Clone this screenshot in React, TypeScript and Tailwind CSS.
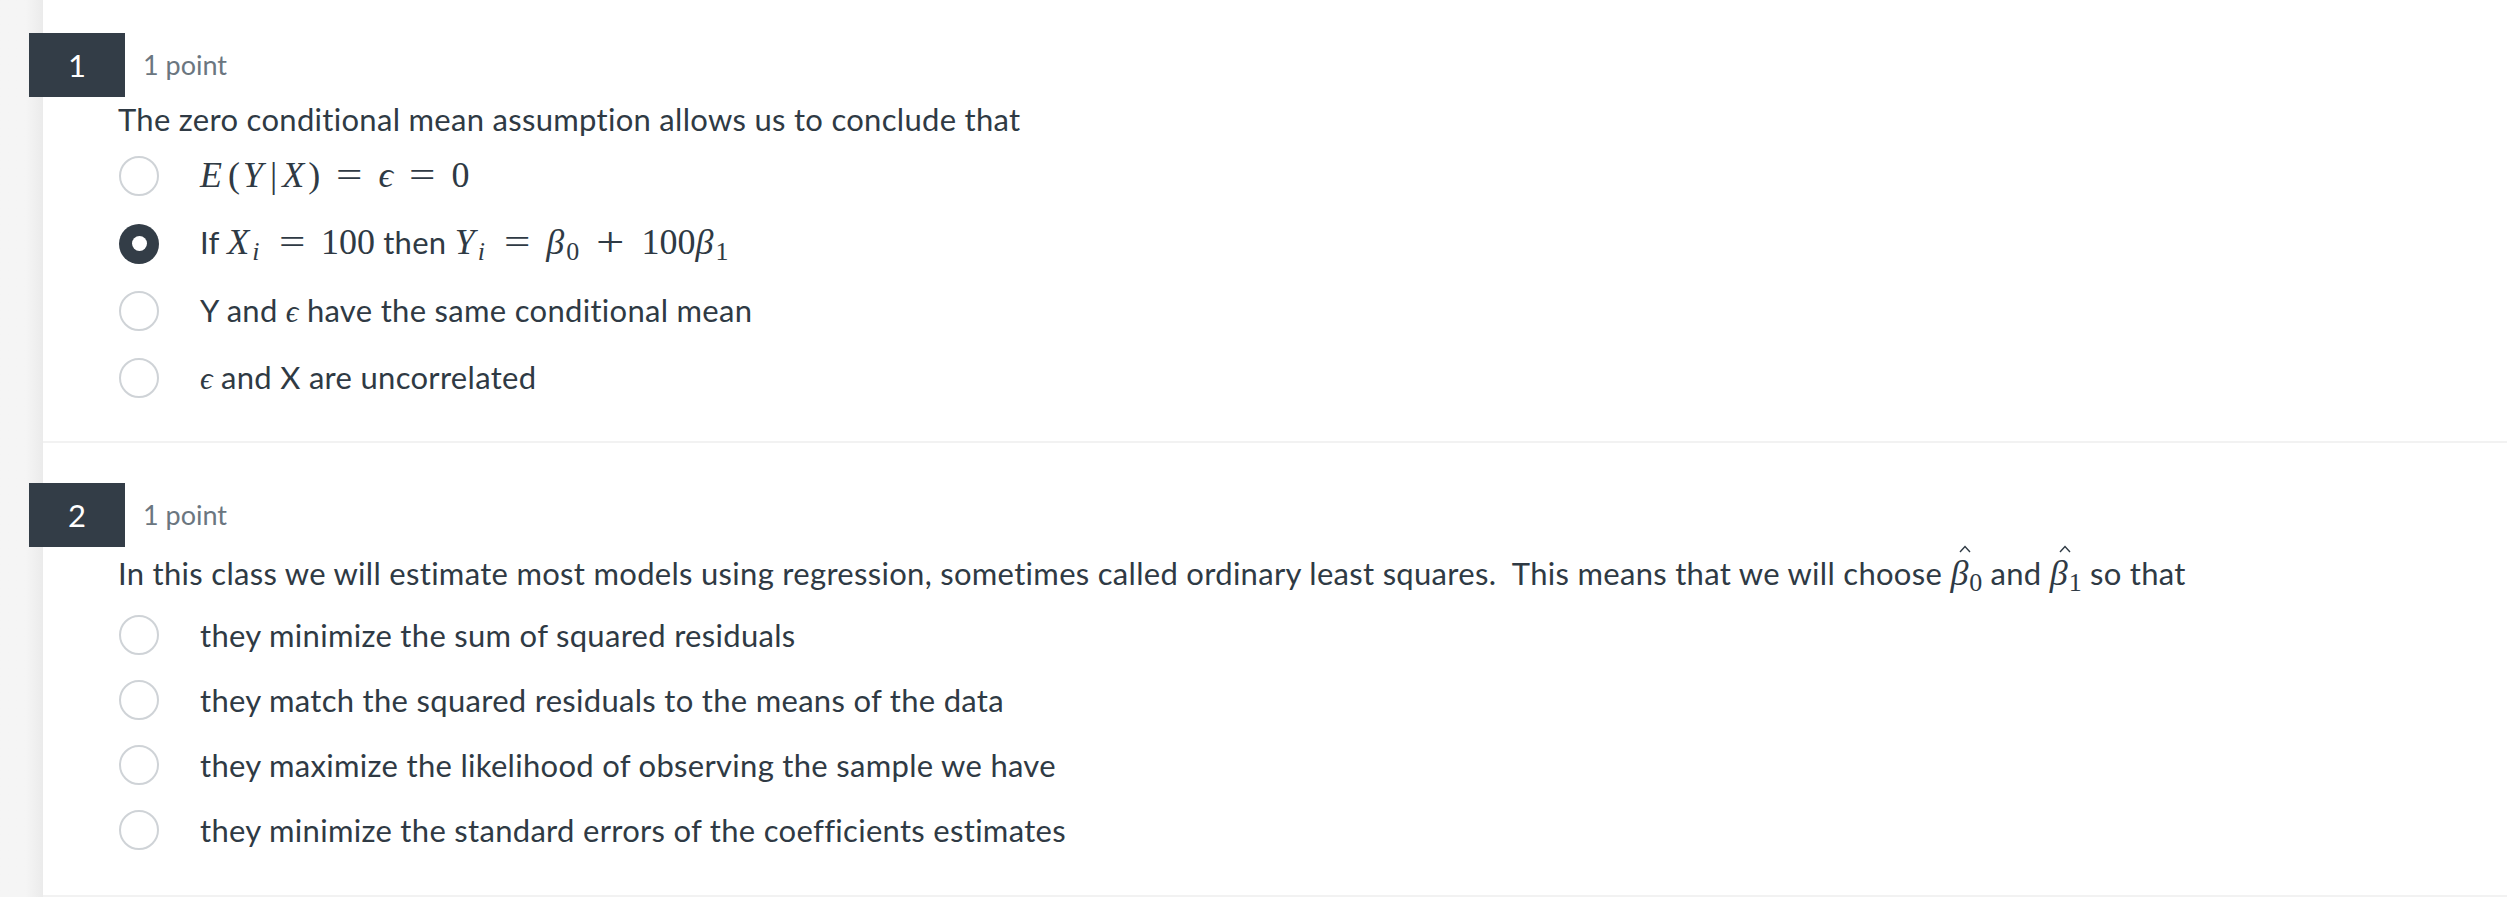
import React from "react";

const serif = "font-['Liberation_Serif',serif]";

type Kids = { children: React.ReactNode };

function Radio({ checked = false }: { checked?: boolean }) {
  if (checked) {
    return (
      <span className="flex h-10 w-10 shrink-0 items-center justify-center rounded-full bg-[#333d47]">
        <span className="h-[15px] w-[15px] rounded-full bg-white" />
      </span>
    );
  }
  return <span className="h-10 w-10 shrink-0 rounded-full border-2 border-[#cfd3d7] bg-white" />;
}

// math helpers (katex-ish)
function M({ children }: Kids) {
  return <span className={`${serif} text-[36px] tracking-normal`}>{children}</span>;
}
function V({ children, r = 0 }: Kids & { r?: number }) {
  return (
    <span className="italic" style={r ? { marginRight: r } : undefined}>
      {children}
    </span>
  );
}
function Eq() {
  return <span className="mx-[19px] inline-block scale-x-[1.3]">=</span>;
}
function Plus() {
  return <span className="mx-[21px] inline-block scale-x-[1.4] scale-y-[1.15]">+</span>;
}
function Sub({ children, italic = false }: Kids & { italic?: boolean }) {
  return (
    <span className={`relative top-[6px] text-[26px] ${italic ? "mx-[3px] italic" : "ml-px"}`}>
      {children}
    </span>
  );
}
function Hat() {
  return (
    <svg
      className="absolute left-[9px] top-[-8px]"
      width="12"
      height="8"
      viewBox="0 0 12 8"
      fill="none"
      stroke="#2f3a44"
      strokeWidth="1.4"
    >
      <path d="M1 7 L6 1.5 L11 7" />
    </svg>
  );
}
function HatBeta({ sub }: { sub: string }) {
  return (
    <M>
      <span className="relative italic">
        β
        <Hat />
      </span>
      <Sub>{sub}</Sub>
    </M>
  );
}

function Option({ checked, math, children }: Kids & { checked?: boolean; math?: boolean }) {
  return (
    <div className={`flex items-center gap-[41px] pl-px ${math ? "h-[43px]" : "min-h-10"}`}>
      <Radio checked={checked} />
      <div className={math ? "leading-[43px]" : "leading-[40px]"}>{children}</div>
    </div>
  );
}

function Question({
  num,
  pad,
  qClass,
  prompt,
  children,
}: Kids & { num: number; pad: string; qClass: string; prompt: React.ReactNode }) {
  return (
    <section className={`border-b-2 border-[#f2f2f2] ${pad}`}>
      {/* header */}
      <div className="-ml-[14px] flex items-center gap-[18px]">
        <div className="flex h-16 w-24 items-center justify-center bg-[#333d47] text-[31px] tracking-normal text-white">
          {num}
        </div>
        <span className="text-[27px] tracking-normal text-[#6b7680]">1 point</span>
      </div>

      <p className={`pl-[75px] leading-[36px] ${qClass}`}>{prompt}</p>

      <div className="flex flex-col gap-[25px] pl-[75px]">{children}</div>
    </section>
  );
}

export default function App() {
  return (
    <div className="flex min-h-screen w-full bg-white font-['Lato',sans-serif] text-[31px] tracking-[0.3px] text-[#2f3a44]">
      <div className="w-[43px] shrink-0 bg-linear-to-r from-[#f5f5f5] from-60% to-[#ebebeb]" />

      <main className="flex flex-1 flex-col">
        <Question
          num={1}
          pad="pt-[33px] pb-[42px]"
          qClass="mt-[4px] mb-[17px]"
          prompt="The zero conditional mean assumption allows us to conclude that"
        >
          <Option math>
            <M>
              <V r={6}>E</V>
              <span className="mr-[3px]">(</span>
              <V r={7}>Y</V>
              <span className="mr-[5px]">|</span>
              <V r={4}>X</V>
              <span>)</span>
              <Eq />
              <V>ϵ</V>
              <Eq />
              <span>0</span>
            </M>
          </Option>
          <Option checked math>
            If{" "}
            <M>
              <V>X</V>
              <Sub italic>i</Sub>
              <Eq />
              100
            </M>{" "}
            then{" "}
            <M>
              <V>Y</V>
              <Sub italic>i</Sub>
              <Eq />
              <V r={1}>β</V>
              <Sub>0</Sub>
              <Plus />
              100
              <V r={1}>β</V>
              <Sub>1</Sub>
            </M>
          </Option>
          <Option>
            Y and <span className={`${serif} italic`}>ϵ</span> have the same conditional mean
          </Option>
          <Option>
            <span className={`${serif} italic`}>ϵ</span> and X are uncorrelated
          </Option>
        </Question>

        <Question
          num={2}
          pad="pt-[40px] pb-[45px]"
          qClass="mt-[8px] mb-[20px]"
          prompt={
            <>
              In this class we will estimate most models using regression, sometimes called ordinary
              least squares.{"\u00a0"} This means that we will choose <HatBeta sub="0" /> and{" "}
              <HatBeta sub="1" /> so that
            </>
          }
        >
          <Option>they minimize the sum of squared residuals</Option>
          <Option>they match the squared residuals to the means of the data</Option>
          <Option>they maximize the likelihood of observing the sample we have</Option>
          <Option>they minimize the standard errors of the coefficients estimates</Option>
        </Question>
      </main>
    </div>
  );
}
